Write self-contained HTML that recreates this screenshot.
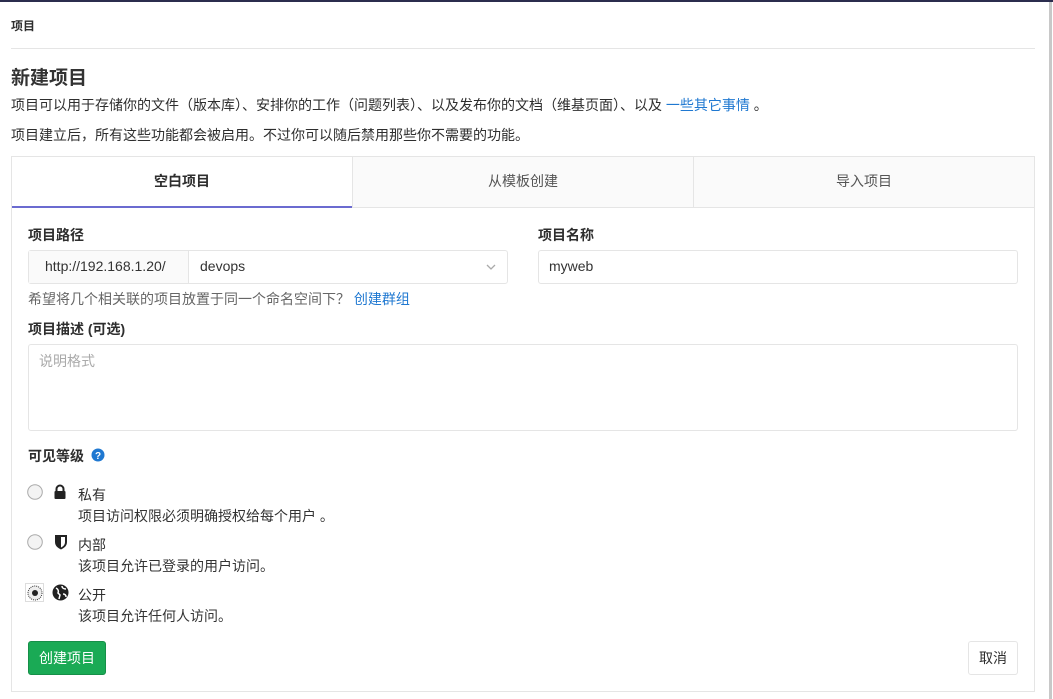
<!DOCTYPE html>
<html><head><meta charset="utf-8"><style>
*{box-sizing:border-box;margin:0;padding:0}
body{width:1053px;height:699px;background:#fff;font-family:"Liberation Sans","Noto Sans CJK SC",sans-serif;color:#2e2e2e;position:relative;overflow:hidden;font-size:14px}
.a{position:absolute;white-space:nowrap}
.lbl{font-weight:bold;font-size:14px;color:#2e2e2e}
.inp{position:absolute;border:1px solid #e5e5e5;border-radius:3px;background:#fff}
</style></head><body>
<div class="a" style="left:0;top:0;width:1053px;height:2px;background:#2b2d4e"></div>
<div class="a" style="left:1049px;top:2px;width:3px;height:697px;background:#c8c8c8"></div>
<div class="a" style="left:11px;top:17px;font-size:12px;font-weight:bold">项目</div>
<div class="a" style="left:11px;top:48px;width:1024px;height:1px;background:#e5e5e5"></div>
<div class="a" style="left:11px;top:63px;font-size:19px;font-weight:bold;color:#333">新建项目</div>
<div class="a" style="left:11px;top:95px">项目可以用于存储你的文件（版本库）、安排你的工作（问题列表）、以及发布你的文档（维基页面）、以及 <span style="color:#1f78d1">一些其它事情</span> 。</div>
<div class="a" style="left:11px;top:125px">项目建立后，所有这些功能都会被启用。不过你可以随后禁用那些你不需要的功能。</div>

<div class="a" style="left:11px;top:156px;width:1024px;height:536px;border:1px solid #e5e5e5"></div>
<div class="a" style="left:12px;top:157px;width:1022px;height:51px;background:#fafafa;border-bottom:1px solid #e5e5e5"></div>
<div class="a" style="left:12px;top:157px;width:340px;height:51px;background:#fff;border-bottom:2px solid #6b6bd0"></div>
<div class="a" style="left:352px;top:157px;width:1px;height:51px;background:#e5e5e5"></div>
<div class="a" style="left:693px;top:157px;width:1px;height:51px;background:#e5e5e5"></div>
<div class="a" style="left:12px;top:171px;width:340px;text-align:center;font-weight:bold;color:#2e2e2e">空白项目</div>
<div class="a" style="left:353px;top:171px;width:340px;text-align:center;color:#555">从模板创建</div>
<div class="a" style="left:694px;top:171px;width:340px;text-align:center;color:#555">导入项目</div>

<div class="a lbl" style="left:28px;top:225px">项目路径</div>
<div class="inp" style="left:28px;top:250px;width:480px;height:34px"></div>
<div class="a" style="left:29px;top:251px;width:160px;height:32px;background:#fafafa;border-right:1px solid #e5e5e5"></div>
<div class="a" style="left:45px;top:258px;color:#333">http://192.168.1.20/</div>
<div class="a" style="left:200px;top:258px;color:#333">devops</div>
<svg class="a" style="left:486px;top:263px" width="10" height="8"><path d="M1 2l4 4 4-4" stroke="#aaa" stroke-width="1.3" fill="none"/></svg>
<div class="a" style="left:28px;top:289px;color:#666">希望将几个相关联的项目放置于同一个命名空间下？ <span style="color:#1f78d1">创建群组</span></div>

<div class="a lbl" style="left:538px;top:225px">项目名称</div>
<div class="inp" style="left:538px;top:250px;width:480px;height:34px"></div>
<div class="a" style="left:549px;top:258px;color:#333">myweb</div>

<div class="a lbl" style="left:28px;top:319px">项目描述 (可选)</div>
<div class="inp" style="left:28px;top:344px;width:990px;height:87px"></div>
<div class="a" style="left:39px;top:351px;color:#aaa">说明格式</div>

<div class="a lbl" style="left:28px;top:446px">可见等级</div>
<svg class="a" style="left:91px;top:448px" width="14" height="14"><circle cx="7" cy="7" r="6.5" fill="#1f78d1"/><text x="7" y="11" font-size="10" font-weight="bold" fill="#fff" text-anchor="middle" font-family="Liberation Sans">?</text></svg>

<svg class="a" style="left:27px;top:484px" width="16" height="16"><circle cx="8" cy="8" r="7.3" fill="#f3f3f3" stroke="#aaa"/></svg>
<svg class="a" style="left:53px;top:484px" width="14" height="15"><path d="M3.5 7V5a3.5 3.5 0 0 1 7 0v2" stroke="#222" stroke-width="2" fill="none"/><rect x="1.5" y="7" width="11" height="8" rx="1" fill="#222"/></svg>
<div class="a" style="left:78px;top:485px">私有</div>
<div class="a" style="left:78px;top:506px;color:#333">项目访问权限必须明确授权给每个用户 。</div>

<svg class="a" style="left:27px;top:534px" width="16" height="16"><circle cx="8" cy="8" r="7.3" fill="#f3f3f3" stroke="#aaa"/></svg>
<svg class="a" style="left:54px;top:534px" width="14" height="16"><path d="M1 1h12v7c0 4-3 6-6 7.5C4 14 1 12 1 8z" fill="#222"/><path d="M7 3h4v5c0 3-2 4.5-4 5.5z" fill="#fff"/></svg>
<div class="a" style="left:78px;top:535px">内部</div>
<div class="a" style="left:78px;top:556px;color:#333">该项目允许已登录的用户访问。</div>

<div class="a" style="left:25px;top:583px;width:19px;height:19px;border:1px solid #ddd;background:#fff"></div>
<svg class="a" style="left:27px;top:585px" width="16" height="16"><circle cx="8" cy="8" r="7" fill="#eee" stroke="#333" stroke-dasharray="1 1"/><circle cx="8" cy="8" r="3" fill="#222"/></svg>
<svg class="a" style="left:52px;top:584px" width="17" height="17"><circle cx="8.5" cy="8.5" r="8" fill="#222"/><path d="M4 4c2 1 3 3 2 5l2 2-1 4M10 2c0 2 2 3 4 3M11 10c2 0 3 1 3 3" stroke="#fff" stroke-width="1.5" fill="none"/></svg>
<div class="a" style="left:78px;top:585px">公开</div>
<div class="a" style="left:78px;top:606px;color:#333">该项目允许任何人访问。</div>

<div class="a" style="left:28px;top:641px;width:78px;height:34px;background:#1aaa55;border:1px solid #168f48;border-radius:3px;color:#fff;text-align:center;line-height:32px">创建项目</div>
<div class="a" style="left:968px;top:641px;width:50px;height:34px;background:#fff;border:1px solid #e5e5e5;border-radius:3px;text-align:center;line-height:32px">取消</div>
</body></html>
